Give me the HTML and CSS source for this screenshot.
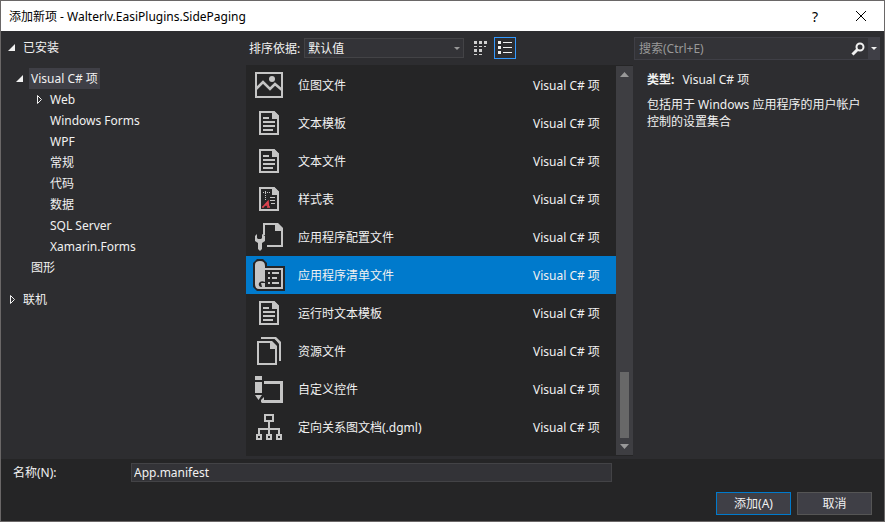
FILE: index.html
```html
<!DOCTYPE html>
<html lang="zh-CN">
<head>
<meta charset="utf-8">
<title>添加新项 - Walterlv.EasiPlugins.SidePaging</title>
<link rel="stylesheet" href="styles.css">
</head>
<body>
<svg class="defs" aria-hidden="true">
  <symbol id="doc" viewBox="0 0 32 32">
    <path d="M7 5H21L25 9V27H7Z" fill="none" stroke="#c5c5c5" stroke-width="2"/>
    <path d="M19 4H21L26 9V12H19ZM10 10H16V12H10ZM10 14H22V16H10ZM10 18H22V20H10ZM10 22H20V24H10Z" fill="#c5c5c5"/>
  </symbol>
</svg>
<div class="window">
  <header class="titlebar">
    <h1>添加新项 - Walterlv.EasiPlugins.SidePaging</h1>
    <button class="caption" aria-label="帮助">?</button>
    <button class="caption" aria-label="关闭"><svg width="12" height="12" viewBox="0 0 12 12"><path d="M1 1L11 11M11 1L1 11" stroke="#000" fill="none"/></svg></button>
  </header>
  <main class="body">
    <nav class="sidebar">
      <ul class="tree">
        <li>
          <div class="node root"><svg class="arrow" viewBox="0 0 9 9"><path d="M7 1V8H0Z" fill="#f1f1f1"/></svg><a href="#">已安装</a></div>
          <ul class="level1">
            <li>
              <div class="node"><svg class="arrow" viewBox="0 0 9 9"><path d="M7 1V8H0Z" fill="#f1f1f1"/></svg><a href="#" class="current">Visual C# 项</a></div>
              <ul class="level2">
                <li class="node"><svg class="arrow" viewBox="0 0 9 9"><path d="M2.500 .5V8.500L6.500 4.500Z" fill="none" stroke="#f1f1f1"/></svg><a href="#">Web</a></li>
                <li class="node leaf"><a href="#">Windows Forms</a></li>
                <li class="node leaf"><a href="#">WPF</a></li>
                <li class="node leaf"><a href="#">常规</a></li>
                <li class="node leaf"><a href="#">代码</a></li>
                <li class="node leaf"><a href="#">数据</a></li>
                <li class="node leaf"><a href="#">SQL Server</a></li>
                <li class="node leaf"><a href="#">Xamarin.Forms</a></li>
              </ul>
            </li>
            <li class="node leaf"><a href="#">图形</a></li>
          </ul>
        </li>
        <li><div class="node root"><svg class="arrow" viewBox="0 0 9 9"><path d="M2.500 .5V8.500L6.500 4.500Z" fill="none" stroke="#f1f1f1"/></svg><a href="#">联机</a></div></li>
      </ul>
    </nav>
    <section class="center">
      <div class="toolbar">
        <label for="sort">排序依据:</label>
        <div class="select">
          <select id="sort"><option>默认值</option></select>
          <svg width="6" height="3" viewBox="0 0 6 3"><path d="M0 0H6L3 3Z" fill="#999"/></svg>
        </div>
        <button class="view" aria-label="小图标"><svg width="14" height="14" viewBox="0 0 14 14" fill="#d0d0d0"><path d="M0 0H3V3H0ZM5 0H8V3H5ZM10 0H13V3H10ZM0 5H3V6H0ZM5 5H8V6H5ZM10 5H12V6H10ZM0 8H3V11H0ZM5 8H8V11H5ZM0 13H3V14H0ZM5 13H8V14H5Z"/></svg></button>
        <button class="view on" aria-label="列表"><svg width="14" height="14" viewBox="0 0 14 14" fill="#f1f1f1"><path d="M0 0H3V3H0ZM5 1H14V2H5ZM0 5H3V8H0ZM5 6H14V7H5ZM0 10H3V13H0ZM5 11H14V12H5Z"/></svg></button>
      </div>
      <div class="listwrap">
        <ul class="items" role="listbox" aria-label="模板">
          <li role="option"><svg viewBox="0 0 32 32"><path d="M3 4H29V28H3Z" fill="none" stroke="#c5c5c5" stroke-width="2"/><path d="M3 20L10 13L17 20L22 15L29 21" fill="none" stroke="#c5c5c5" stroke-width="2.500"/><circle cx="19" cy="10" r="3" fill="#c5c5c5"/></svg><span>位图文件</span><span class="kind">Visual C# 项</span></li>
          <li role="option"><svg><use href="#doc"/></svg><span>文本模板</span><span class="kind">Visual C# 项</span></li>
          <li role="option"><svg><use href="#doc"/></svg><span>文本文件</span><span class="kind">Visual C# 项</span></li>
          <li role="option"><svg viewBox="0 0 32 32"><path d="M7 5H21L25 9V27H7Z" fill="none" stroke="#c5c5c5" stroke-width="2"/><path d="M19 4H21L26 9V12H19ZM17 14H22V15H17ZM17 17H22V18H17ZM18 20H22V21H18Z" fill="#c5c5c5"/><path d="M10 9.500H18M12.500 8V17" fill="none" stroke="#c5c5c5" stroke-dasharray="1 1"/><path d="M9 24H11M10 24L15 18.500L15.500 24M12 22H15M14 24H17" fill="none" stroke="#e0434f" stroke-width="1.500"/></svg><span>样式表</span><span class="kind">Visual C# 项</span></li>
          <li role="option"><svg viewBox="0 0 32 32"><path d="M11 14V3H24L29 8V25H14" fill="none" stroke="#c5c5c5" stroke-width="2"/><path d="M22 2H25L30 7V10H22Z" fill="#c5c5c5"/><path d="M4 13V17L5 18H8L9 17V13L12 15V20L9 22V28L7 30L5 28V22L2 20V15Z" fill="#c5c5c5"/></svg><span>应用程序配置文件</span><span class="kind">Visual C# 项</span></li>
          <li role="option" aria-selected="true" class="selected"><svg viewBox="0 0 32 32"><path d="M0 4L4 0H10L14 4V7H32V32H4L0 28Z" fill="#252526"/><path d="M2 6Q2 2 7 2Q12 2 12 7V23Q8 21 6 24Q5 27 8 28H13V30H6Q2 30 2 25Z" fill="#c5c5c5"/><path d="M12 10H29V29H7" fill="none" stroke="#c5c5c5" stroke-width="2"/><path d="M8 24H12V28H9Z" fill="#c5c5c5"/><path d="M15 13H17V15H15ZM19 13H26V15H19ZM15 18H17V20H15ZM19 18H24V20H19ZM15 23H17V25H15ZM19 23H26V25H19Z" fill="#c5c5c5"/></svg><span>应用程序清单文件</span><span class="kind">Visual C# 项</span></li>
          <li role="option"><svg><use href="#doc"/></svg><span>运行时文本模板</span><span class="kind">Visual C# 项</span></li>
          <li role="option"><svg viewBox="0 0 32 32"><path d="M5 7H18L23 12V29H5Z" fill="none" stroke="#c5c5c5" stroke-width="2"/><path d="M17 6H19L24 11V14H17Z" fill="#c5c5c5"/><path d="M8 3H22L27 8V26" fill="none" stroke="#c5c5c5" stroke-width="2"/><path d="M21 2H23L28 7V9H26Z" fill="#c5c5c5"/></svg><span>资源文件</span><span class="kind">Visual C# 项</span></li>
          <li role="option"><svg viewBox="0 0 32 32"><path d="M11 9.500H28.500V28.500H9" fill="none" stroke="#c5c5c5" stroke-width="3"/><path d="M2 3H9V7H2ZM2 9H9V20H2ZM2 22H9L5.500 27Z" fill="#c5c5c5"/><path d="M8 30V27L11 24V27Z" fill="#c5c5c5"/></svg><span>自定义控件</span><span class="kind">Visual C# 项</span></li>
          <li role="option"><svg viewBox="0 0 32 32"><path d="M12 4H20V10H12ZM4 24H8V28H4ZM14 24H18V28H14ZM24 24H28V28H24ZM16 11V23M6 23V18H26V23" fill="none" stroke="#c5c5c5" stroke-width="2"/></svg><span>定向关系图文档(.dgml)</span><span class="kind">Visual C# 项</span></li>
        </ul>
        <div class="scrollbar" aria-hidden="true">
          <svg width="9" height="5" viewBox="0 0 9 5"><path d="M0 5H9L4.500 0Z" fill="#999"/></svg>
          <div class="track"><div class="thumb"></div></div>
          <svg width="9" height="5" viewBox="0 0 9 5"><path d="M0 0H9L4.500 5Z" fill="#999"/></svg>
        </div>
      </div>
    </section>
    <aside class="details">
      <div class="search">
        <input type="search" placeholder="搜索(Ctrl+E)" aria-label="搜索">
        <button class="go" aria-label="搜索"><svg width="14" height="14" viewBox="0 0 14 14"><circle cx="9" cy="5" r="3.500" fill="none" stroke="#f1f1f1" stroke-width="2"/><path d="M6.500 7.500L1.500 12.500" stroke="#f1f1f1" stroke-width="3"/></svg></button>
        <button class="drop" aria-label="搜索选项"><svg width="6" height="3" viewBox="0 0 6 3"><path d="M0 0H6L3 3Z" fill="#f1f1f1"/></svg></button>
      </div>
      <div class="info">
        <p><strong>类型:</strong>Visual C# 项</p>
        <p>包括用于 Windows 应用程序的用户帐户控制的设置集合</p>
      </div>
    </aside>
  </main>
  <form class="footer">
    <div class="field">
      <label for="name">名称(N):</label>
      <input id="name" type="text" value="App.manifest">
    </div>
    <div class="actions">
      <button type="button" class="primary">添加(A)</button>
      <button type="button">取消</button>
    </div>
  </form>
</div>
</body>
</html>
```
FILE: styles.css
```css
* { box-sizing: border-box; }
body {
  margin: 0;
  background: #252526;
  color: #f1f1f1;
  font: 12px/17px "Noto Sans", "Noto Sans CJK SC", sans-serif;
}
button, input, select { font: inherit; color: inherit; margin: 0; }
button { padding: 0; border: 0; background: none; display: flex; align-items: center; justify-content: center; }
ul { list-style: none; margin: 0; padding: 0; }
a { color: inherit; text-decoration: none; }
p { margin: 0; }
svg { display: block; flex: none; }
.defs { position: absolute; width: 0; height: 0; }

.window {
  min-height: 100vh;
  border: 1px solid #6a6767;
  display: flex;
  flex-direction: column;
}
.titlebar { display: flex; height: 30px; background: #fff; color: #000; align-items: center; padding-left: 8px; }
.titlebar h1 { flex: 1; margin: 0; font-size: 12px; font-weight: 400; }
.caption { width: 46px; height: 30px; font-size: 14px; color: #000; }

.body {
  flex: 1;
  display: grid;
  grid-template-columns: 244px minmax(0, 388px) minmax(200px, 1fr);
  background: #2d2d30;
}

.sidebar { padding: 6px 0 0 7px; }
.node { display: flex; align-items: center; height: 21px; }
.node a { padding: 0 2px; line-height: 21px; }
.arrow { width: 9px; height: 9px; margin-right: 4px; }
.level1 { padding: 10px 0 11px 8px; }
.level2 { padding-left: 19px; }
.leaf { padding-left: 13px; }
.current { background: #3f3f46; }

.toolbar { display: flex; align-items: center; height: 34px; padding-left: 4px; }
.select { position: relative; width: 160px; margin: 0 6px 0 4px; }
.select select {
  width: 100%; height: 20px; padding: 0 3px;
  appearance: none; border: 1px solid #434346; border-radius: 0; background: #333337; line-height: 17px;
}
.select svg { position: absolute; right: 4px; top: 9px; }
.view { width: 22px; height: 22px; }
.view + .view { margin-left: 2px; }
.view.on { border: 1px solid #3399ff; }

.listwrap { display: flex; margin: 0 0 3px 1px; padding-top: 1px; background: #252526; }
.items { flex: 1; padding-bottom: 10px; }
.items li { display: flex; align-items: center; height: 38px; padding: 0 12px 0 7px; }
.items svg { width: 32px; height: 32px; margin-right: 13px; }
.items .kind { width: 71px; margin-left: auto; }
.selected { background: #007acc; }
.scrollbar {
  width: 17px; margin-bottom: 1px; padding: 6px 0; background: #3e3e42;
  display: flex; flex-direction: column; align-items: center;
}
.track { flex: 1; width: 9px; margin: 6px 0; display: flex; flex-direction: column; justify-content: flex-end; }
.thumb { height: 66px; background: #686868; }

.details { padding: 6px 4px 0 1px; }
.search { display: flex; height: 23px; border: 1px solid #3f3f46; background: #333337; }
.search input { flex: 1; min-width: 0; padding: 0 4px; border: 0; background: none; appearance: none; }
.search input::placeholder { color: #999; opacity: 1; }
.go { width: 20px; }
.drop { width: 11px; background: #3f3f46; }
.info { padding: 11px 10px 0 13px; display: grid; gap: 8px; }
.info strong { margin-right: 8px; }

.footer { padding: 4px 12px 6px; background: #252526; }
.field { display: flex; align-items: center; }
.field label { width: 118px; }
.field input {
  width: 56%; height: 19px; padding: 0 2px;
  border: 1px solid #434346; background: #333337; border-radius: 0;
}
.actions { display: flex; justify-content: flex-end; gap: 6px; padding-top: 10px; }
.actions button { width: 75px; height: 23px; border: 1px solid #555; background: #3f3f46; }
.actions .primary { border-color: #007acc; }
```
